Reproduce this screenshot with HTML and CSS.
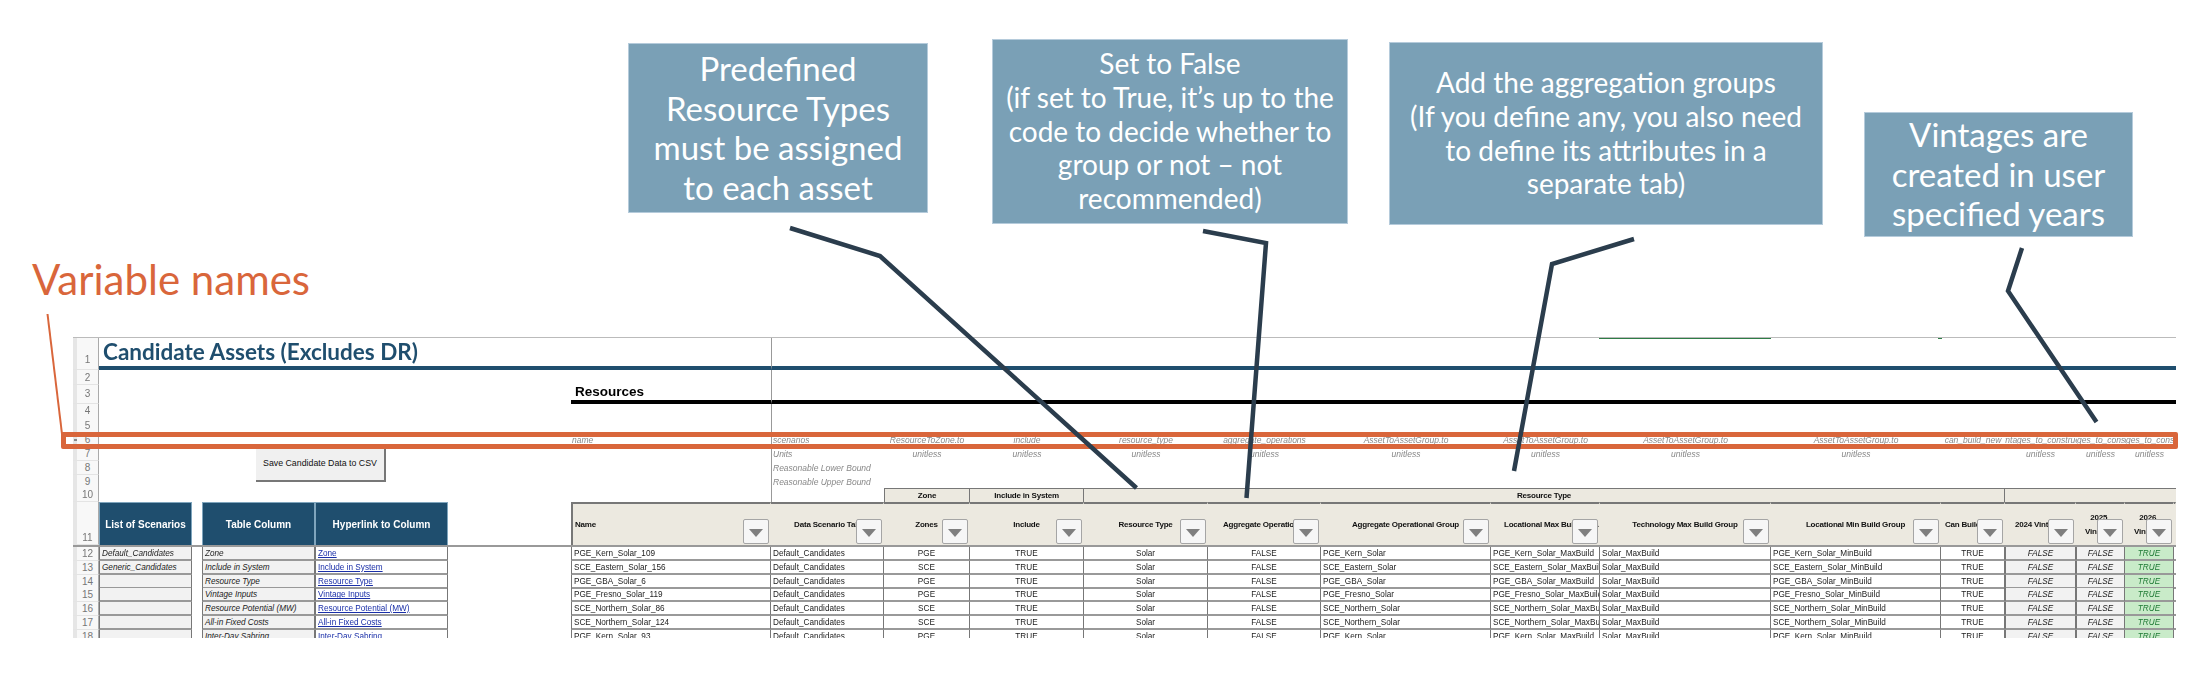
FILE: index.html
```html
<!DOCTYPE html>
<html lang="en">
<head>
    <meta charset="UTF-8">
    <title>Candidate Assets annotated</title>
    <link rel="stylesheet" href="styles.css">
</head>
<body>

<div id="sheet">
    <div class="row r1"><div class="rh lift">1</div><div class="title">Candidate Assets (Excludes DR)</div><div class="right navy"></div></div>
    <div class="row r2"><div class="rh">2</div><div class="left"></div><div class="right"></div></div>
    <div class="row r3"><div class="rh lift">3</div><div class="left2"></div><div class="resources">Resources</div><div class="right black"></div></div>
    <div class="row r4"><div class="rh">4</div><div class="left"></div><div class="right"></div></div>
    <div class="row r5"><div class="rh">5</div><div class="left"></div><div class="right"></div></div>
    <div class="row r6"><div class="rh marker">6</div><div class="left2"></div>
        <div class="v">name</div><div class="v lline">scenarios</div><div class="v m">ResourceToZone.to</div><div class="v m">include</div><div class="v m">resource_type</div><div class="v m">aggregate_operations</div><div class="v m">AssetToAssetGroup.to</div><div class="v m">AssetToAssetGroup.to</div><div class="v m">AssetToAssetGroup.to</div><div class="v m">AssetToAssetGroup.to</div><div class="v m">can_build_new</div><div class="v m">vintages_to_construct</div><div class="v m">vintages_to_construct</div><div class="v m">vintages_to_construct</div>
    </div>
    <div class="row r7"><div class="rh">7</div><div class="left2"></div>
        <div></div><div class="v lline">Units</div><div class="v m">unitless</div><div class="v m">unitless</div><div class="v m">unitless</div><div class="v m">unitless</div><div class="v m">unitless</div><div class="v m">unitless</div><div class="v m">unitless</div><div class="v m">unitless</div><div></div><div class="v m">unitless</div><div class="v m">unitless</div><div class="v m">unitless</div>
    </div>
    <div class="row r7"><div class="rh">8</div><div class="left"></div><div class="right v">Reasonable Lower Bound</div></div>
    <div class="row r7"><div class="rh">9</div><div class="left"></div><div class="right v">Reasonable Upper Bound</div></div>
    <div class="row r7"><div class="rh">10</div><div class="left"></div><div class="lline"></div>
        <div class="band">Zone</div><div class="band">Include in System</div><div class="band wide-band">Resource Type</div><div class="band rest-band"></div>
    </div>

    <div class="row r11">
        <div class="rh">11</div>
        <div class="hd">List of Scenarios</div><div></div><div class="hd">Table Column</div><div class="hd">Hyperlink to Column</div><div></div>
        <div class="th left-text">Name<span class="filter"></span></div>
        <div class="th">Data Scenario Tab<span class="filter"></span></div>
        <div class="th">Zones<span class="filter"></span></div>
        <div class="th">Include<span class="filter"></span></div>
        <div class="th">Resource Type<span class="filter"></span></div>
        <div class="th">Aggregate Operational<span class="filter"></span></div>
        <div class="th">Aggregate Operational Group<span class="filter"></span></div>
        <div class="th start-13">Locational Max Build Group<span class="filter"></span></div>
        <div class="th">Technology Max Build Group<span class="filter"></span></div>
        <div class="th">Locational Min Build Group<span class="filter"></span></div>
        <div class="th start-4">Can Build New<span class="filter"></span></div>
        <div class="th start-10">2024 Vintage<span class="filter"></span></div>
        <div class="th two-line">2025<br>Vintage<span class="filter"></span></div>
        <div class="th two-line">2026<br>Vintage<span class="filter"></span></div>
        <div class="th"></div>
    </div>

    <div class="row r12">
        <div class="rh">12</div><div class="grey it">Default_Candidates</div><div></div><div class="grey it">Zone</div><div class="td"><a href="#">Zone</a></div><div></div>
        <div class="td">PGE_Kern_Solar_109</div><div class="td">Default_Candidates</div><div class="td m">PGE</div><div class="td m">TRUE</div><div class="td m">Solar</div><div class="td m">FALSE</div><div class="td">PGE_Kern_Solar</div><div class="td">PGE_Kern_Solar_MaxBuild</div><div class="td">Solar_MaxBuild</div><div class="td">PGE_Kern_Solar_MinBuild</div><div class="td m">TRUE</div><div class="grey it m">FALSE</div><div class="grey it m">FALSE</div><div class="on m">TRUE</div><div class="td"></div>
    </div>
    <div class="row r12">
        <div class="rh">13</div><div class="grey it">Generic_Candidates</div><div></div><div class="grey it">Include in System</div><div class="td"><a href="#">Include in System</a></div><div></div>
        <div class="td">SCE_Eastern_Solar_156</div><div class="td">Default_Candidates</div><div class="td m">SCE</div><div class="td m">TRUE</div><div class="td m">Solar</div><div class="td m">FALSE</div><div class="td">SCE_Eastern_Solar</div><div class="td">SCE_Eastern_Solar_MaxBuild</div><div class="td">Solar_MaxBuild</div><div class="td">SCE_Eastern_Solar_MinBuild</div><div class="td m">TRUE</div><div class="grey it m">FALSE</div><div class="grey it m">FALSE</div><div class="on m">TRUE</div><div class="td"></div>
    </div>
    <div class="row r12">
        <div class="rh">14</div><div class="grey it"></div><div></div><div class="grey it">Resource Type</div><div class="td"><a href="#">Resource Type</a></div><div></div>
        <div class="td">PGE_GBA_Solar_6</div><div class="td">Default_Candidates</div><div class="td m">PGE</div><div class="td m">TRUE</div><div class="td m">Solar</div><div class="td m">FALSE</div><div class="td">PGE_GBA_Solar</div><div class="td">PGE_GBA_Solar_MaxBuild</div><div class="td">Solar_MaxBuild</div><div class="td">PGE_GBA_Solar_MinBuild</div><div class="td m">TRUE</div><div class="grey it m">FALSE</div><div class="grey it m">FALSE</div><div class="on m">TRUE</div><div class="td"></div>
    </div>
    <div class="row r12">
        <div class="rh">15</div><div class="grey it"></div><div></div><div class="grey it">Vintage Inputs</div><div class="td"><a href="#">Vintage Inputs</a></div><div></div>
        <div class="td">PGE_Fresno_Solar_119</div><div class="td">Default_Candidates</div><div class="td m">PGE</div><div class="td m">TRUE</div><div class="td m">Solar</div><div class="td m">FALSE</div><div class="td">PGE_Fresno_Solar</div><div class="td">PGE_Fresno_Solar_MaxBuild</div><div class="td">Solar_MaxBuild</div><div class="td">PGE_Fresno_Solar_MinBuild</div><div class="td m">TRUE</div><div class="grey it m">FALSE</div><div class="grey it m">FALSE</div><div class="on m">TRUE</div><div class="td"></div>
    </div>
    <div class="row r12">
        <div class="rh">16</div><div class="grey it"></div><div></div><div class="grey it">Resource Potential (MW)</div><div class="td"><a href="#">Resource Potential (MW)</a></div><div></div>
        <div class="td">SCE_Northern_Solar_86</div><div class="td">Default_Candidates</div><div class="td m">SCE</div><div class="td m">TRUE</div><div class="td m">Solar</div><div class="td m">FALSE</div><div class="td">SCE_Northern_Solar</div><div class="td">SCE_Northern_Solar_MaxBuild</div><div class="td">Solar_MaxBuild</div><div class="td">SCE_Northern_Solar_MinBuild</div><div class="td m">TRUE</div><div class="grey it m">FALSE</div><div class="grey it m">FALSE</div><div class="on m">TRUE</div><div class="td"></div>
    </div>
    <div class="row r12">
        <div class="rh">17</div><div class="grey it"></div><div></div><div class="grey it">All-in Fixed Costs</div><div class="td"><a href="#">All-in Fixed Costs</a></div><div></div>
        <div class="td">SCE_Northern_Solar_124</div><div class="td">Default_Candidates</div><div class="td m">SCE</div><div class="td m">TRUE</div><div class="td m">Solar</div><div class="td m">FALSE</div><div class="td">SCE_Northern_Solar</div><div class="td">SCE_Northern_Solar_MaxBuild</div><div class="td">Solar_MaxBuild</div><div class="td">SCE_Northern_Solar_MinBuild</div><div class="td m">TRUE</div><div class="grey it m">FALSE</div><div class="grey it m">FALSE</div><div class="on m">TRUE</div><div class="td"></div>
    </div>
    <div class="row r12">
        <div class="rh">18</div><div class="grey it"></div><div></div><div class="grey it">Inter-Day Sabring</div><div class="td"><a href="#">Inter-Day Sabring</a></div><div></div>
        <div class="td">PGE_Kern_Solar_93</div><div class="td">Default_Candidates</div><div class="td m">PGE</div><div class="td m">TRUE</div><div class="td m">Solar</div><div class="td m">FALSE</div><div class="td">PGE_Kern_Solar</div><div class="td">PGE_Kern_Solar_MaxBuild</div><div class="td">Solar_MaxBuild</div><div class="td">PGE_Kern_Solar_MinBuild</div><div class="td m">TRUE</div><div class="grey it m">FALSE</div><div class="grey it m">FALSE</div><div class="on m">TRUE</div><div class="td"></div>
    </div>

    <button class="save">Save Candidate Data to CSV</button>
    <div class="tick tick-a"></div>
    <div class="tick tick-b"></div>
</div>

<!-- annotations drawn on top of the sheet -->
<div class="var-names">Variable names</div>
<div class="var-box"></div>

<svg class="pointers" width="2206" height="680" viewBox="0 0 2206 680">
    <polyline class="orange-line" points="47.5,314 62,434"/>
    <polyline class="pointer" points="790,228 880,256 1136.5,488"/>
    <polyline class="pointer" points="1203,231 1266,243 1246.5,498"/>
    <polyline class="pointer" points="1634,239 1552,264 1514,471"/>
    <polyline class="pointer" points="2022,248 2008,291 2096.5,422"/>
</svg>

<div class="callout big box-1">Predefined<br>Resource Types<br>must be assigned<br>to each asset</div>
<div class="callout box-2">Set to False<br>(if set to True, it’s up to the<br>code to decide whether to<br>group or not – not<br>recommended)</div>
<div class="callout box-3">Add the aggregation groups<br>(If you define any, you also need<br>to define its attributes in a<br>separate tab)</div>
<div class="callout big box-4">Vintages are<br>created in user<br>specified years</div>

</body>
</html>
```

FILE: styles.css
```css
html, body {
    margin: 0;
    height: 680px;
    overflow: hidden;
    background-color: #fff;
}
#sheet {
    position: relative;
    width: 2103px;
    height: 301px;
    margin: 337px 0 0 73px;
    overflow: hidden;
    font-family: "Liberation Sans", Arial, sans-serif;
    font-size: 8.2px;
    color: #222;
    border-top: 1px solid #bbb;
    box-sizing: border-box;
    filter: blur(0.3px);
}
.row {
    display: grid;
    grid-template-columns: 26px 93px 10px 113px 133px 123px 200px 113px 86px 114px 124px 113px 170px 109px 171px 170px 64px 71px 49px 49px 2px;
}
.r1 { height: 32px; }
.r2 { height: 15px; }
.r3 { height: 18.5px; }
.r4 { height: 12.5px; }
.r5 { height: 17px; }
.r6 { height: 14px; }
.r7 { height: 13.75px; }
.r11 { height: 45px; border-bottom: 2px solid #999; box-sizing: border-box; }
.r12 { height: 13.75px; }

/* row numbers */
.rh {
    display: flex;
    align-items: flex-end;
    justify-content: center;
    box-sizing: border-box;
    padding-left: 4px;
    background: linear-gradient(to right, #e6e6e6 4px, #f8f8f8 4px);
    border-right: 1px solid #aaa;
    border-bottom: 1px solid #e4e4e4;
    color: #777;
    font-size: 10px;
    line-height: 13px;
}
.lift { padding-bottom: 3px; }
.marker { position: relative; }
.marker::before {
    content: "";
    position: absolute;
    left: 1px;
    top: 6px;
    width: 3px;
    height: 2px;
    background-color: #888;
}
.left { grid-column: 2 / 8; }
.left2 { grid-column: 2 / 7; }
.right { grid-column: 8 / 22; border-left: 1px solid #999; }
.lline { border-left: 1px solid #999; }

.title {
    grid-column: 2 / 8;
    box-sizing: border-box;
    border-bottom: 4px solid #1f4e6e;
    padding-left: 4px;
    font-family: Lato, sans-serif;
    font-size: 22.5px;
    font-weight: bold;
    line-height: 28px;
    color: #1f4e6e;
    white-space: nowrap;
}
.navy { border-bottom: 4px solid #1f4e6e; }
.black { border-bottom: 4px solid #000; }
.resources {
    box-sizing: border-box;
    border-bottom: 4px solid #000;
    padding-left: 4px;
    font-size: 13.5px;
    font-weight: bold;
    line-height: 14px;
    color: #000;
}

/* variable names and units */
.v {
    display: flex;
    align-items: center;
    padding-left: 1px;
    overflow: hidden;
    font-size: 8.5px;
    font-style: italic;
    color: #888;
    white-space: nowrap;
}
.v.m { justify-content: center; padding-left: 0; }

.band {
    display: flex;
    align-items: center;
    justify-content: center;
    box-sizing: border-box;
    background-color: #ece9e0;
    border: 1px solid #777;
    border-left: 0;
    border-bottom: 0;
    font-size: 8px;
    font-weight: bold;
    letter-spacing: -0.2px;
    color: #111;
}
.band:nth-child(4) { border-left: 1px solid #777; }
.wide-band { grid-column: 11 / 18; }
.rest-band { grid-column: 18 / 22; border-right: 0; }

/* blue list headers */
.hd {
    display: flex;
    align-items: center;
    justify-content: center;
    box-sizing: border-box;
    background-color: #1f4e6e;
    border: 1px solid #7fa5bd;
    border-bottom: 0;
    color: #fff;
    font-size: 10px;
    font-weight: bold;
    white-space: nowrap;
}

/* table header */
.th {
    position: relative;
    display: flex;
    align-items: center;
    justify-content: center;
    box-sizing: border-box;
    background-color: #ece9e0;
    border-top: 2px solid #777;
    border-right: 1px solid #ece9e0;
    font-size: 8px;
    font-weight: bold;
    letter-spacing: -0.2px;
    color: #111;
    white-space: nowrap;
    overflow: hidden;
}
.left-text { justify-content: flex-start; padding-left: 2px; border-left: 2px solid #777; }
.start-13 { justify-content: flex-start; padding-left: 13px; }
.start-4 { justify-content: flex-start; padding-left: 4px; }
.start-10 { justify-content: flex-start; padding-left: 10px; }
.two-line { justify-content: flex-start; padding-left: 9px; line-height: 14px; text-align: center; }
.filter {
    position: absolute;
    right: 1px;
    bottom: 1px;
    width: 24px;
    height: 23px;
    background-color: #f6f6f6;
    border: 1px solid #a5a5a5;
    border-radius: 2px;
}
.filter::after {
    content: "";
    position: absolute;
    left: 5px;
    top: 9px;
    border-left: 7px solid transparent;
    border-right: 7px solid transparent;
    border-top: 8px solid #7f7f7f;
}

/* table cells */
.td, .grey, .on {
    display: flex;
    align-items: center;
    box-sizing: border-box;
    padding: 1px 0 0 2px;
    border-right: 1px solid #777;
    border-bottom: 2px solid #999;
    overflow: hidden;
    white-space: nowrap;
    line-height: 11px;
}
.row > .td:first-child, .td:nth-child(5), .td:nth-child(7) { border-left: 1px solid #777; }
.grey { background-color: #f2f2f2; border-left: 1px solid #777; }
.it { font-style: italic; }
.on { background-color: #c9ebc9; color: #1f7a35; font-style: italic; }
.m { justify-content: center; padding-left: 0; }
.td a { color: #1a2fa8; }

.save {
    position: absolute;
    left: 183px;
    top: 108px;
    width: 130px;
    height: 36px;
    padding: 0;
    background-color: #f0f0f0;
    border: 0;
    border-right: 2px solid #777;
    border-bottom: 2px solid #777;
    font-family: "Liberation Sans", Arial, sans-serif;
    font-size: 8.8px;
    color: #111;
}
.tick {
    position: absolute;
    top: -1px;
    height: 1.5px;
    background-color: #2e7d46;
}
.tick-a { left: 1526px; width: 172px; }
.tick-b { left: 1865px; width: 4px; }

/* annotations */
.var-names {
    position: absolute;
    left: 32px;
    top: 255px;
    font-family: Lato, sans-serif;
    font-size: 42px;
    line-height: 48px;
    color: #d9663b;
    white-space: nowrap;
}
.var-box {
    position: absolute;
    left: 61px;
    top: 432px;
    width: 2117px;
    height: 17px;
    box-sizing: border-box;
    border: 5px solid #d9663b;
    border-radius: 2px;
}
.pointers {
    position: absolute;
    left: 0;
    top: 0;
}
.pointer {
    fill: none;
    stroke: #2b3d4d;
    stroke-width: 4.5;
}
.orange-line {
    fill: none;
    stroke: #d9663b;
    stroke-width: 2;
}
.callout {
    position: absolute;
    display: flex;
    align-items: center;
    justify-content: center;
    box-sizing: border-box;
    background-color: #7aa0b6;
    border: 1px solid #b5cbdb;
    font-family: Lato, sans-serif;
    font-size: 28px;
    line-height: 33.7px;
    color: #fff;
    text-align: center;
}
.big { font-size: 33px; line-height: 39.5px; }
.box-1 { left: 628px; top: 43px; width: 300px; height: 170px; }
.box-2 { left: 992px; top: 39px; width: 356px; height: 185px; }
.box-3 { left: 1389px; top: 42px; width: 434px; height: 183px; }
.box-4 { left: 1864px; top: 112px; width: 269px; height: 125px; }
```
